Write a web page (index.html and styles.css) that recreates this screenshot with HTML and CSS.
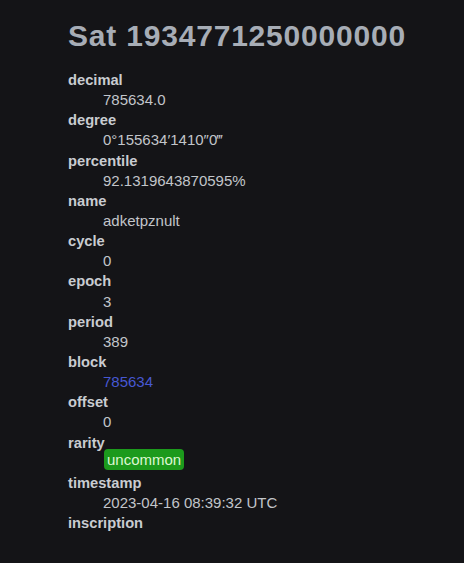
FILE: index.html
```html
<!DOCTYPE html>
<html>
<head>
<meta charset="utf-8">
<link rel="stylesheet" href="styles.css">
</head>
<body>
<main class="page">
  <h1 class="title">Sat 1934771250000000</h1>
  <dl class="props">
    <dt>decimal</dt><dd>785634.0</dd>
    <dt>degree</dt><dd>0°155634′1410″0‴</dd>
    <dt>percentile</dt><dd>92.1319643870595%</dd>
    <dt>name</dt><dd>adketpznult</dd>
    <dt>cycle</dt><dd>0</dd>
    <dt>epoch</dt><dd>3</dd>
    <dt>period</dt><dd>389</dd>
    <dt>block</dt><dd><a class="link" href="#">785634</a></dd>
    <dt>offset</dt><dd>0</dd>
    <dt>rarity</dt><dd><span class="badge">uncommon</span></dd>
    <dt>timestamp</dt><dd>2023-04-16 08:39:32 UTC</dd>
    <dt>inscription</dt>
  </dl>
</main>
</body>
</html>
```

FILE: styles.css
```css
html, body {
  margin: 0;
  padding: 0;
  background: #141417;
  height: 100%;
}
body {
  font-family: "Liberation Sans", Arial, sans-serif;
  color: #c3c6cb;
}
.page {
  padding: 18px 0 0 68px;
}
.title {
  margin: 0 0 16px 0;
  font-size: 30px;
  line-height: 36px;
  font-weight: bold;
  color: #a7adb6;
  letter-spacing: 0.8px;
}
.props {
  margin: 0;
  font-size: 15px;
  line-height: 20.14px;
}
.props dt {
  font-weight: bold;
  font-size: 14.7px;
  color: #c9ccd1;
}
.props dd {
  margin: 0 0 0 35px;
  color: #c2c5ca;
}
.link {
  color: #4758d2;
  text-decoration: none;
}
.badge {
  display: inline-block;
  vertical-align: top;
  margin: -4px 0 0 1px;
  background: #1c9a1c;
  color: #dcf7d2;
  padding: 0 3px;
  line-height: 21px;
  border-radius: 4px;
}
```
